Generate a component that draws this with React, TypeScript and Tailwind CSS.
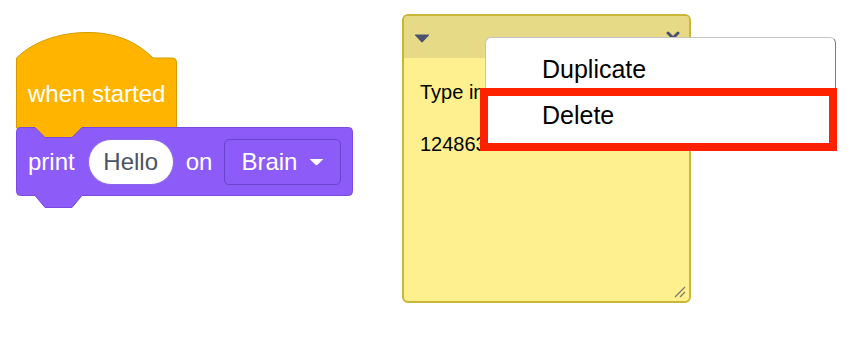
import React from 'react';

const FONT = { fontFamily: '"Liberation Sans", Arial, sans-serif' };

function HatBlock() {
  return (
    <div className="relative h-[96px] w-[162px]">
      {/* block outline */}
      <svg
        className="absolute left-0 top-0 overflow-visible"
        width="162"
        height="96"
        viewBox="0 0 162 96"
      >
        <path
          d="M0.5,26 C20,7 48,0.5 72,0.5 C100,0.5 121,10 137,26 L156.5,26 Q160.5,26 160.5,30 L160.5,96 L66,96 L56,106 L29,106 L19,96 L0.5,96 Z"
          fill="#ffb500"
          stroke="#d59c00"
          strokeWidth="1"
        />
      </svg>
      <div className="relative flex h-full items-end pb-[16px] pl-[12px] text-[24px] text-white">
        when started
      </div>
    </div>
  );
}

function PrintBlock() {
  return (
    <div className="relative -mt-px h-[69px] w-[337px]">
      <svg
        className="absolute left-0 top-0 overflow-visible"
        width="337"
        height="69"
        viewBox="0 0 337 69"
      >
        <path
          d="M4.5,0.5 L19,0.5 L29,10.5 L56,10.5 L66,0.5 L332.5,0.5 Q336.5,0.5 336.5,4.5 L336.5,64.5 Q336.5,68.5 332.5,68.5 L66,68.5 L56,80.5 L29,80.5 L19,68.5 L4.5,68.5 Q0.5,68.5 0.5,64.5 L0.5,4.5 Q0.5,0.5 4.5,0.5 Z"
          fill="#8d5cf8"
          stroke="#7a4ae0"
          strokeWidth="1"
        />
      </svg>
      <div className="relative flex h-full items-center gap-3 pl-[12px] text-[24px] text-white">
        <span>print</span>
        <span className="ml-px flex h-[46px] w-[86px] items-center justify-center rounded-full border border-[#8a66ea] bg-white text-[#4a5366]">
          Hello
        </span>
        <span>on</span>
        <span className="flex h-[46px] w-[117px] items-center gap-[12px] rounded-[5px] border border-[#6c42d2] pl-[16px]">
          Brain
          <svg width="15" height="8" viewBox="0 0 15 8">
            <path d="M1.5,1 L13.5,1 Q14.5,1 13.7,1.8 L8.2,7 Q7.5,7.6 6.8,7 L1.3,1.8 Q0.5,1 1.5,1 Z" fill="#ffffff" />
          </svg>
        </span>
      </div>
    </div>
  );
}

function StickyNote() {
  return (
    <div className="absolute left-[402px] top-[14px] flex h-[289px] w-[289px] flex-col overflow-hidden rounded-[6px] border-2 border-[#c8b637] bg-[#fef08f]">
      <div className="flex h-[42px] shrink-0 items-center justify-between bg-[#e6da86] pl-[10px] pr-[8px]">
        <svg width="16" height="9" viewBox="0 0 16 9" className="mt-[3px]">
          <path d="M1.5,0.5 L14.5,0.5 Q15.6,0.5 14.8,1.4 L8.8,8 Q8,8.8 7.2,8 L1.2,1.4 Q0.4,0.5 1.5,0.5 Z" fill="#4a5270" />
        </svg>
        <svg width="16" height="16" viewBox="0 0 16 16" className="mt-[2px]">
          <path d="M3,3 L13,13 M13,3 L3,13" stroke="#4a5270" strokeWidth="3" strokeLinecap="round" />
        </svg>
      </div>
      <div className="relative flex-1 px-4 pt-[22px] text-[20px] leading-[24px] text-black">
        <p>Type in a note</p>
        <p className="mt-[28px]">124863204</p>
        <svg
          className="absolute bottom-[3px] right-[3px]"
          width="12"
          height="12"
          viewBox="0 0 12 12"
        >
          <path d="M1,11 L11,1 M6,11 L11,6" stroke="#7d7a6a" strokeWidth="1.3" />
        </svg>
      </div>
    </div>
  );
}

function ContextMenu() {
  return (
    <>
      <div className="absolute left-[485px] top-[37px] w-[351px] rounded-t-[6px] border border-[#c4c4c4] border-r-[#7c7c7c] bg-white pb-[8px] pt-[8px] text-[25px] text-black">
        <div className="h-[46px] pl-[56px] leading-[46px]">Duplicate</div>
        <div className="h-[46px] pl-[56px] leading-[46px]">Delete</div>
      </div>
      {/* highlight box */}
      <div className="absolute left-[480px] top-[88px] h-[63px] w-[357px] border-8 border-[#ff2200]" />
    </>
  );
}

export default function App() {
  return (
    <div className="relative h-[342px] w-[866px] overflow-hidden bg-white" style={FONT}>
      {/* block stack on the workspace canvas */}
      <div className="absolute left-[16px] top-[32px] flex flex-col">
        <HatBlock />
        <PrintBlock />
      </div>
      <StickyNote />
      <ContextMenu />
    </div>
  );
}
